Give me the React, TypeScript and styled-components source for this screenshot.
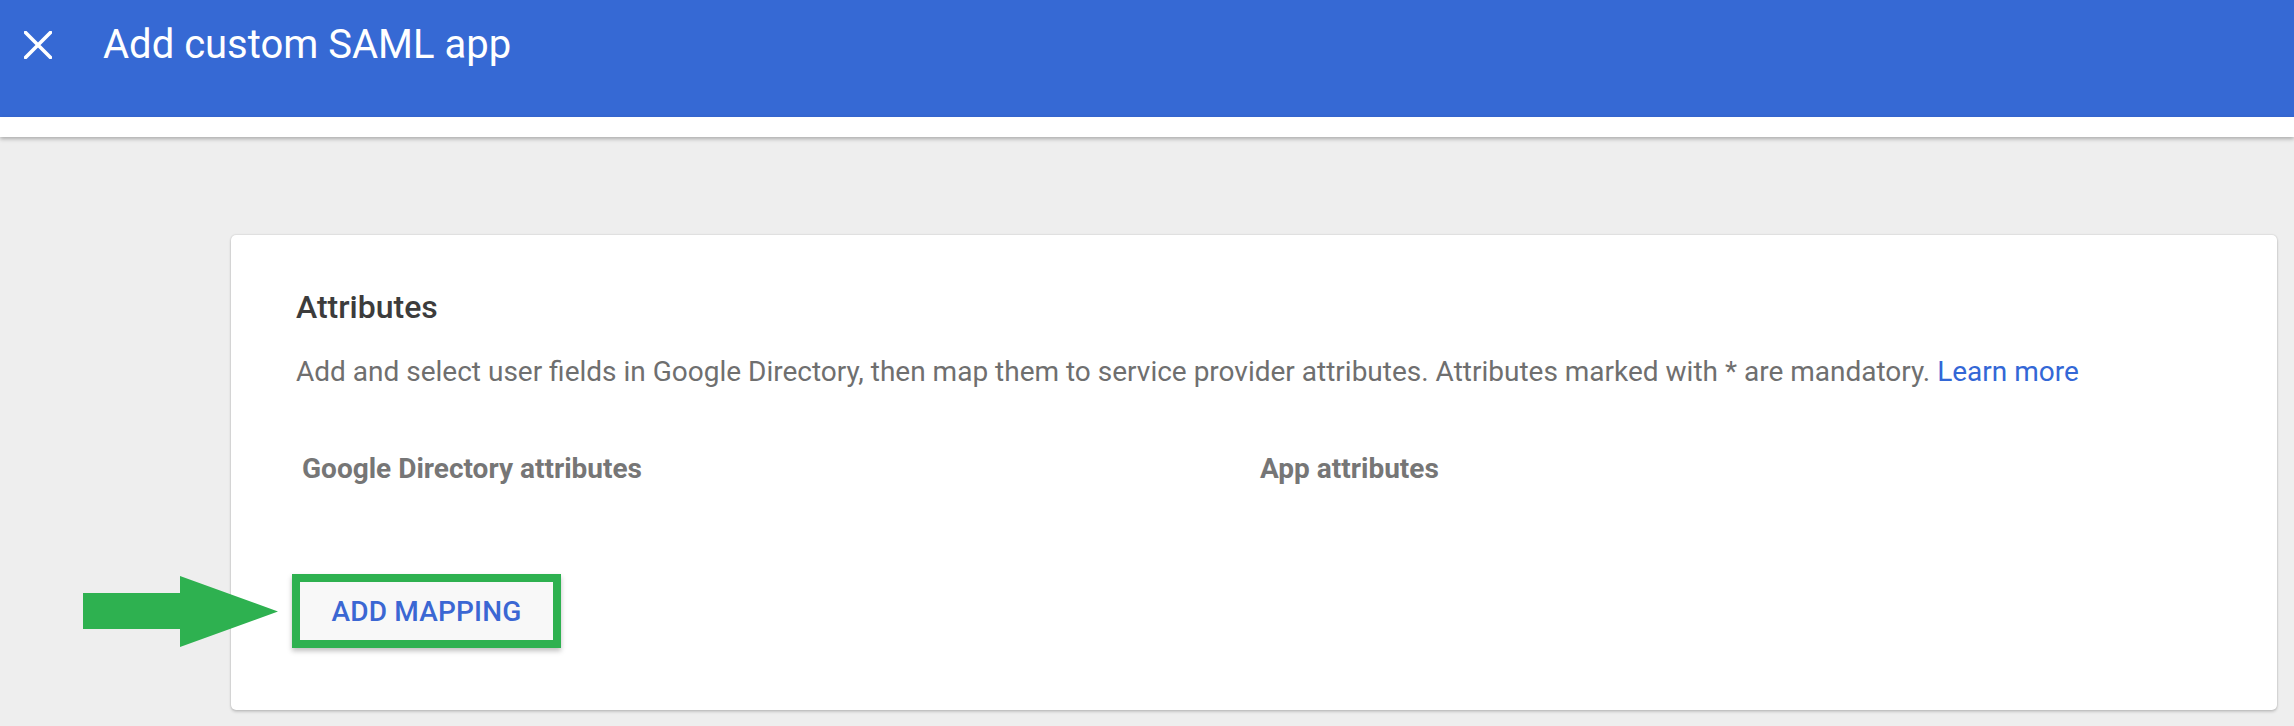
import React from 'react';
import styled, { createGlobalStyle } from 'styled-components';

const GlobalStyle = createGlobalStyle`
  html, body {
    margin: 0;
    padding: 0;
    background: #eeeeee;
    font-family: Roboto, "Noto Sans", Arial, sans-serif;
  }
  * {
    box-sizing: border-box;
  }
`;

const Page = styled.div`
  width: 2294px;
  height: 726px;
  overflow: hidden;
  background: #eeeeee;
`;

const Header = styled.header`
  height: 117px;
  background: #3669d4;
`;

const Toolbar = styled.div`
  height: 90px;
  display: flex;
  align-items: center;
  padding-left: 24px;
  gap: 51px;
`;

const CloseButton = styled.button`
  width: 28px;
  height: 28px;
  padding: 0;
  border: none;
  background: transparent;
  display: flex;
  cursor: pointer;
`;

const Title = styled.h1`
  margin: 0;
  color: #ffffff;
  font-size: 40px;
  font-weight: 400;
  line-height: 48px;
`;

const Strip = styled.div`
  height: 20px;
  background: #ffffff;
  box-shadow: 0 2px 4px rgba(0, 0, 0, 0.28);
  position: relative;
`;

const Content = styled.main`
  padding: 98px 17px 0 231px;
`;

const Card = styled.section`
  background: #ffffff;
  border-radius: 5px;
  box-shadow: 0 0 2px rgba(0, 0, 0, 0.2), 0 2px 3px rgba(0, 0, 0, 0.16);
  padding: 52px 65px 62px;
  height: 475px;
`;

const CardTitle = styled.h2`
  margin: 0;
  font-size: 32px;
  font-weight: 500;
  line-height: 40px;
  color: #3c3c3c;
`;

const Description = styled.p`
  margin: 25px 0 0;
  font-size: 28px;
  line-height: 40px;
  color: #6f6f6f;
`;

const LearnMore = styled.a`
  color: #3367d6;
  text-decoration: none;
`;

const Columns = styled.div`
  display: grid;
  grid-template-columns: 1fr 1fr;
  margin-top: 57px;
`;

const ColumnHeader = styled.div`
  padding-left: 6px;
  font-size: 28px;
  font-weight: 700;
  line-height: 40px;
  color: #767676;
`;

const Highlight = styled.div`
  position: relative;
  display: inline-flex;
  margin: 85px 0 0 -4px;
  border: 8px solid #2eb150;
  box-shadow: 0 3px 5px rgba(0, 0, 0, 0.25);
`;

const MappingButton = styled.button`
  width: 253px;
  height: 58px;
  border: none;
  background: #f8f8f8;
  color: #3b67d3;
  font-family: Roboto, "Noto Sans", Arial, sans-serif;
  font-size: 28px;
  font-weight: 500;
  letter-spacing: 0.2px;
  cursor: pointer;
  padding: 0;
`;

const Pointer = styled.svg`
  position: absolute;
  left: -217px;
  top: -6px;
`;

const CloseIcon = () => (
  <svg width="28" height="28" viewBox="0 0 28 28">
    <path d="M1.5 1.5 26.5 26.5 M26.5 1.5 1.5 26.5" stroke="#ffffff" strokeWidth="3.6" strokeLinecap="square" />
  </svg>
);

const App = () => (
  <Page>
    <GlobalStyle />
    <Header>
      <Toolbar>
        <CloseButton aria-label="Close">
          <CloseIcon />
        </CloseButton>
        <Title>Add custom SAML app</Title>
      </Toolbar>
    </Header>
    <Strip />
    <Content>
      <Card>
        <CardTitle>Attributes</CardTitle>
        <Description>
          Add and select user fields in Google Directory, then map them to service provider attributes.
          {' '}Attributes marked with * are mandatory. <LearnMore href="#">Learn more</LearnMore>
        </Description>
        <Columns>
          <ColumnHeader>Google Directory attributes</ColumnHeader>
          <ColumnHeader>App attributes</ColumnHeader>
        </Columns>
        <Highlight>
          <Pointer width="195" height="71" viewBox="0 0 195 71">
            <polygon points="0,17 97,17 97,0 195,35.5 97,71 97,53 0,53" fill="#2eb150" />
          </Pointer>
          <MappingButton>ADD MAPPING</MappingButton>
        </Highlight>
      </Card>
    </Content>
  </Page>
);

export default App;
